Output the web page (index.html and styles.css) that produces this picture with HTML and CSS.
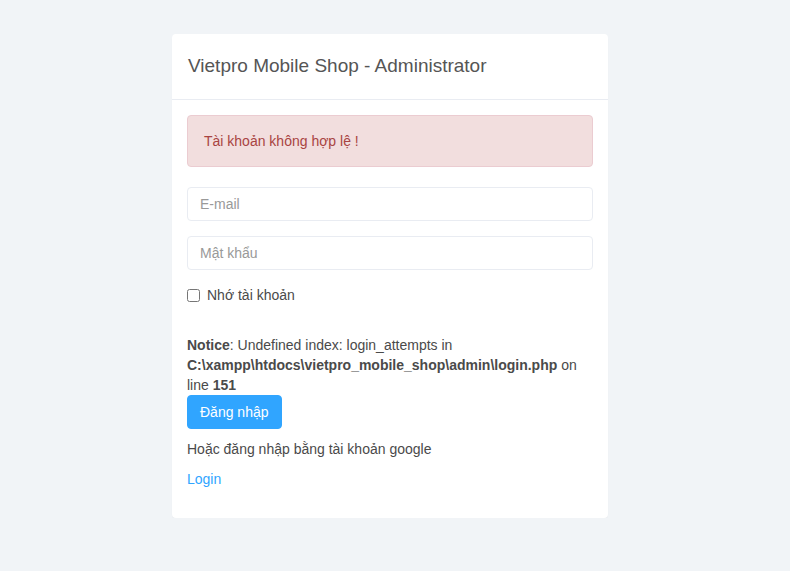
FILE: index.html
```html
<!DOCTYPE html>
<html lang="vi">
<head>
<meta charset="utf-8">
<title>Vietpro Mobile Shop - Administrator</title>
<link rel="stylesheet" href="styles.css">
</head>
<body>
<div class="panel">
  <div class="panel-heading">Vietpro Mobile Shop - Administrator</div>
  <div class="panel-body">
    <div class="alert">Tài khoản không hợp lệ !</div>
    <form class="form">
      <div class="form-group"><input class="form-control" type="text" placeholder="E-mail"></div>
      <div class="form-group"><input class="form-control" type="password" placeholder="Mật khẩu"></div>
      <div class="checkbox"><label><input type="checkbox" class="cb"> Nhớ tài khoản</label></div>
      <div class="notice"><b>Notice</b>: Undefined index: login_attempts in <b>C:\xampp\htdocs\vietpro_mobile_shop\admin\login.php</b> on line <b>151</b></div>
      <button type="button" class="btn">Đăng nhập</button>
    </form>
    <p class="alt">Hoặc đăng nhập bằng tài khoản google</p>
    <p class="alt"><a href="#" class="link">Login</a></p>
  </div>
</div>
</body>
</html>
```

FILE: styles.css
```css
html, body {
  margin: 0;
  padding: 0;
}
body {
  background: #f1f4f7;
  font-family: "Liberation Sans", Arial, sans-serif;
  font-size: 14px;
  line-height: 20px;
  color: #4a4a4a;
}
.panel {
  width: 436px;
  margin: 34px 0 0 172px;
  background: #fff;
  border-radius: 4px;
  box-shadow: 0 1px 1px rgba(0,0,0,0.04);
}
.panel-heading {
  height: 65px;
  line-height: 64px;
  padding: 0 15px 0 16px;
  font-size: 19px;
  color: #555;
  border-bottom: 1px solid #e9ecf2;
}
.panel-body {
  padding: 15px 15px 29px;
}
.alert {
  background: #f2dede;
  border: 1px solid #ebccd1;
  color: #a94442;
  border-radius: 4px;
  padding: 15px 15px 15px 16px;
  margin-bottom: 20px;
}
.form-group {
  margin-bottom: 15px;
}
.form-control {
  display: block;
  box-sizing: border-box;
  width: 100%;
  height: 34px;
  padding: 6px 12px;
  font-family: inherit;
  font-size: 14px;
  color: #555;
  background: #fff;
  border: 1px solid #e9ecf2;
  border-radius: 4px;
  outline: none;
}
.form-control::placeholder {
  color: #999;
}
.checkbox {
  margin: 15px 0 30px;
  line-height: 20px;
}
.checkbox label {
  display: flex;
  align-items: center;
  gap: 7px;
}
.cb {
  margin: 0;
  width: 13px;
  height: 13px;
}
.notice b {
  font-weight: bold;
}
.btn {
  display: block;
  height: 34px;
  padding: 6px 12px;
  font-family: inherit;
  font-size: 14px;
  line-height: 20px;
  color: #fff;
  background: #30a5ff;
  border: 1px solid #30a5ff;
  border-radius: 4px;
}
.alt {
  margin: 10px 0 0;
}
.link {
  color: #30a5ff;
  text-decoration: none;
}
```
